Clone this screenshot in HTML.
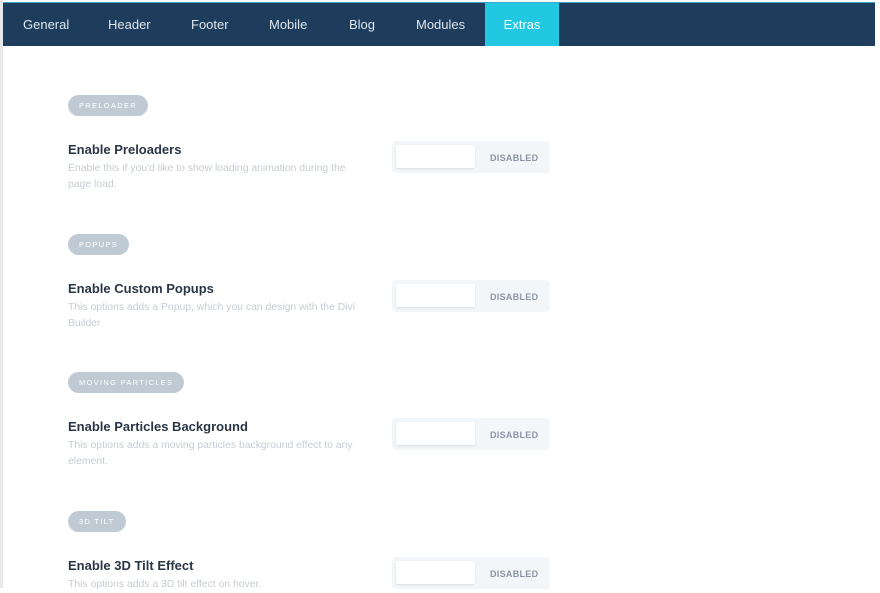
<!DOCTYPE html><html><head><style>
body{margin:0;width:880px;height:588px;overflow:hidden;background:#fff;font-family:"Liberation Sans",sans-serif;position:relative}
.lb{position:absolute;left:0;top:0;width:3px;height:588px;background:#e6e8ea}
.nav{position:absolute;left:3px;top:2px;width:872px;height:43px;background:#1e3d5c;border-top:1px solid #3aa7c9}
.nav span{position:absolute;top:0;height:43px;line-height:43px;color:#dfe6ee;font-size:13px}
.nav .act{background:#22c8e2;color:#fff;left:482px;width:74px;text-align:center}
.sec{position:absolute;left:68px}
.pill{position:absolute;left:0;height:21px;line-height:21px;padding:0 11px;border-radius:11px;background:#c0cad5;color:#fff;font-size:7.5px;letter-spacing:1.3px;white-space:nowrap}
.t{position:absolute;left:0;font-size:13px;font-weight:bold;color:#2a3646;white-space:nowrap}
.d{position:absolute;left:0;width:295px;font-size:10.4px;line-height:16px;color:#c5ccd6}
.tg{position:absolute;left:324px;top:46px;width:158px;height:32px;background:#f3f6f9;border-radius:4px}
.tg i{position:absolute;left:4px;top:4px;width:79px;height:23px;background:#fff;border-radius:2px;box-shadow:0 1px 2px rgba(0,0,0,.1)}
.tg b{position:absolute;left:98px;top:1px;line-height:32px;font-size:9px;color:#8a96a4;font-weight:bold;letter-spacing:.3px}
</style></head><body>
<div class="lb"></div>
<div class="nav"><span style="left:20px">General</span><span style="left:105px">Header</span><span style="left:188px">Footer</span><span style="left:266px">Mobile</span><span style="left:346px">Blog</span><span style="left:413px">Modules</span><span class="act">Extras</span></div>
<div class="sec" style="top:95px"><div class="pill">PRELOADER</div><div class="t" style="top:47px">Enable Preloaders</div><div class="d" style="top:66px">Enable this if you'd like to show loading animation during the page load.</div><div class="tg"><i></i><b>DISABLED</b></div></div>
<div class="sec" style="top:234px"><div class="pill">POPUPS</div><div class="t" style="top:47px">Enable Custom Popups</div><div class="d" style="top:66px">This options adds a Popup, which you can design with the Divi Builder</div><div class="tg"><i></i><b>DISABLED</b></div></div>
<div class="sec" style="top:372px"><div class="pill">MOVING PARTICLES</div><div class="t" style="top:47px">Enable Particles Background</div><div class="d" style="top:66px">This options adds a moving particles background effect to any element.</div><div class="tg"><i></i><b>DISABLED</b></div></div>
<div class="sec" style="top:511px"><div class="pill">3D TILT</div><div class="t" style="top:47px">Enable 3D Tilt Effect</div><div class="d" style="top:66px">This options adds a 3D tilt effect on hover.</div><div class="tg"><i></i><b>DISABLED</b></div></div>
</body></html>
